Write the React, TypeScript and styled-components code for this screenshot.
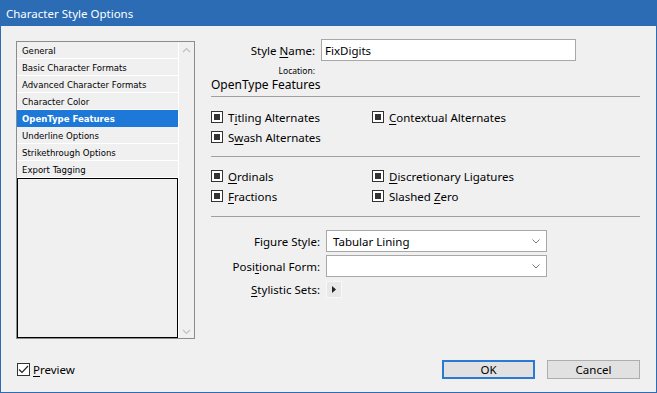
import styled, { createGlobalStyle } from 'styled-components';

const GlobalStyle = createGlobalStyle`
  html, body {
    margin: 0;
    padding: 0;
    background: #f0f0f0;
  }
  * { box-sizing: border-box; }
`;

const accent = '#2b6cb5';
const uiFont = `"Noto Sans", "Open Sans", sans-serif`;

const Window = styled.div`
  width: 657px;
  height: 393px;
  display: flex;
  flex-direction: column;
  border: 1px solid ${accent};
  border-top: none;
  background: #f0f0f0;
  font-family: ${uiFont};
  color: #000;
`;

const TitleBar = styled.div`
  height: 26px;
  margin: 0 -1px;
  padding-left: 6px;
  display: flex;
  align-items: center;
  background: ${accent};
  color: #fff;
  font-size: 11.5px;
`;

const Body = styled.div`
  flex: 1;
  display: flex;
  flex-direction: column;
  padding: 15px 16px 12px 15px;
`;

const Main = styled.div`
  display: flex;
  gap: 16px;
  flex: 1;
`;

const ListBox = styled.div`
  width: 179px;
  height: 298px;
  border: 1px solid #8c8c8c;
  display: flex;
  background: #f0f0f0;
`;

const ListItems = styled.div`
  width: 161px;
  display: flex;
  flex-direction: column;
`;

const ListItem = styled.div<{ $selected?: boolean }>`
  height: 17px;
  padding-left: 5px;
  display: flex;
  align-items: center;
  font-family: "DejaVu Sans Condensed", "Liberation Sans", sans-serif;
  font-size: 9.5px;
  border-bottom: 1px solid ${p => (p.$selected ? '#1e78d7' : '#ffffff')};
  background: ${p => (p.$selected ? '#1e78d7' : 'transparent')};
  color: ${p => (p.$selected ? '#fff' : '#000')};
  font-weight: ${p => (p.$selected ? 'bold' : 'normal')};
`;

const EmptyArea = styled.div`
  flex: 1;
  border: 1px solid #000;
`;

const ScrollBar = styled.div`
  flex: 1;
  border-left: 1px solid #fff;
  display: flex;
  flex-direction: column;
  justify-content: space-between;
  align-items: center;
  padding: 5px 0 3px;
`;

const Panel = styled.div`
  flex: 1;
  display: flex;
  flex-direction: column;
  margin-top: -2px;
  font-size: 11.5px;
`;

const FieldRow = styled.div<{ $labelWidth: number }>`
  display: grid;
  grid-template-columns: ${p => p.$labelWidth}px auto;
  column-gap: 6px;
  align-items: center;
`;

const Label = styled.span`
  text-align: right;
  white-space: nowrap;
`;

const TextInput = styled.div`
  width: 255px;
  height: 22px;
  border: 1px solid #a8a8a8;
  background: #fff;
  padding-left: 3px;
  display: flex;
  align-items: center;
`;

const Location = styled.div`
  width: 104px;
  text-align: right;
  font-size: 8.5px;
  margin-top: 4px;
  height: 12px;
`;

const SectionTitle = styled.div`
  margin-top: -1px;
  font-size: 12px;
  height: 17px;
  line-height: 17px;
`;

const Divider = styled.div<{ $top: number }>`
  height: 1px;
  background: #a0a0a0;
  margin-top: ${p => p.$top}px;
`;

const CheckGrid = styled.div<{ $top: number; $bottom: number }>`
  display: grid;
  grid-template-columns: 161px auto;
  grid-auto-rows: 20px;
  margin-top: ${p => p.$top}px;
  margin-bottom: ${p => p.$bottom}px;
`;

const CheckItem = styled.div`
  display: flex;
  align-items: center;
  gap: 5px;
  white-space: nowrap;
`;

const Box = styled.span`
  width: 12px;
  height: 12px;
  border: 1px solid #333;
  background: #fff;
  display: inline-flex;
  align-items: center;
  justify-content: center;
  &::after {
    content: '';
    width: 6px;
    height: 6px;
    background: #333;
  }
`;

const U = styled.span`
  text-decoration: underline;
  text-underline-offset: 2px;
`;

const FormArea = styled.div`
  margin-top: 13px;
  display: flex;
  flex-direction: column;
  gap: 3px;
`;

const Select = styled.div`
  width: 221px;
  height: 22px;
  border: 1px solid #a8a8a8;
  background: #fff;
  padding: 0 6px;
  display: flex;
  align-items: center;
  justify-content: space-between;
`;

const Expander = styled.div`
  width: 16px;
  height: 17px;
  margin-top: 1px;
  display: flex;
  align-items: center;
  justify-content: center;
  background: #e8e8e8;
  border: 1px solid #f8f8f8;
`;

const Footer = styled.div`
  display: flex;
  align-items: center;
  height: 22px;
`;

const PreviewCheck = styled.label`
  display: flex;
  align-items: center;
  gap: 3px;
  font-size: 11.5px;
  margin-left: 1px;
`;

const CheckBoxEmpty = styled.span`
  width: 13px;
  height: 13px;
  border: 1px solid #333;
  background: #fff;
  display: inline-flex;
  align-items: center;
  justify-content: center;
`;

const Buttons = styled.div`
  margin-left: auto;
  display: flex;
  gap: 12px;
`;

const Button = styled.div<{ $default?: boolean }>`
  width: 93px;
  height: 19px;
  display: flex;
  align-items: center;
  justify-content: center;
  background: #e1e1e1;
  border: ${p => (p.$default ? '2px solid #2a7ad4' : '1px solid #adadad')};
  font-size: 11.5px;
`;

const Chevron = ({ up }: { up?: boolean }) => (
  <svg width="9" height="6" viewBox="0 0 9 6">
    <path
      d={up ? 'M1 5 L4.5 1.5 L8 5' : 'M1 1 L4.5 4.5 L8 1'}
      fill="none"
      stroke="#c0c0c0"
      strokeWidth="1.2"
    />
  </svg>
);

const SmallChevron = () => (
  <svg width="8" height="5" viewBox="0 0 8 5">
    <path d="M0.5 0.5 L4 4 L7.5 0.5" fill="none" stroke="#7a7a7a" strokeWidth="1" />
  </svg>
);

const items = [
  'General',
  'Basic Character Formats',
  'Advanced Character Formats',
  'Character Color',
  'OpenType Features',
  'Underline Options',
  'Strikethrough Options',
  'Export Tagging',
];

export default function App() {
  return (
    <>
      <GlobalStyle />
      <Window>
        <TitleBar>Character Style Options</TitleBar>
        <Body>
          <Main>
            <ListBox>
              <ListItems>
                {items.map(item => (
                  <ListItem key={item} $selected={item === 'OpenType Features'}>
                    {item}
                  </ListItem>
                ))}
                <EmptyArea />
              </ListItems>
              <ScrollBar>
                <Chevron up />
                <Chevron />
              </ScrollBar>
            </ListBox>
            <Panel>
              <FieldRow $labelWidth={104}>
                <Label>
                  Style <U>N</U>ame:
                </Label>
                <TextInput>FixDigits</TextInput>
              </FieldRow>
              <Location>Location:</Location>
              <SectionTitle>OpenType Features</SectionTitle>
              <Divider $top={3} />
              <CheckGrid $top={10} $bottom={9}>
                <CheckItem>
                  <Box />
                  <span>
                    T<U>i</U>tling Alternates
                  </span>
                </CheckItem>
                <CheckItem>
                  <Box />
                  <span>
                    <U>C</U>ontextual Alternates
                  </span>
                </CheckItem>
                <CheckItem>
                  <Box />
                  <span>
                    S<U>w</U>ash Alternates
                  </span>
                </CheckItem>
              </CheckGrid>
              <Divider $top={0} />
              <CheckGrid $top={9} $bottom={10}>
                <CheckItem>
                  <Box />
                  <span>
                    <U>O</U>rdinals
                  </span>
                </CheckItem>
                <CheckItem>
                  <Box />
                  <span>
                    <U>D</U>iscretionary Ligatures
                  </span>
                </CheckItem>
                <CheckItem>
                  <Box />
                  <span>
                    <U>F</U>ractions
                  </span>
                </CheckItem>
                <CheckItem>
                  <Box />
                  <span>
                    Slashed <U>Z</U>ero
                  </span>
                </CheckItem>
              </CheckGrid>
              <Divider $top={0} />
              <FormArea>
                <FieldRow $labelWidth={109}>
                  <Label>
                    Fi<U>g</U>ure Style:
                  </Label>
                  <Select>
                    <span>Tabular Lining</span>
                    <SmallChevron />
                  </Select>
                </FieldRow>
                <FieldRow $labelWidth={109}>
                  <Label>
                    Posi<U>t</U>ional Form:
                  </Label>
                  <Select>
                    <span />
                    <SmallChevron />
                  </Select>
                </FieldRow>
                <FieldRow $labelWidth={109}>
                  <Label>
                    <U>S</U>tylistic Sets:
                  </Label>
                  <Expander>
                    <svg width="4" height="7" viewBox="0 0 4 7">
                      <path d="M0 0 L4 3.5 L0 7 Z" fill="#222" />
                    </svg>
                  </Expander>
                </FieldRow>
              </FormArea>
            </Panel>
          </Main>
          <Footer>
            <PreviewCheck>
              <CheckBoxEmpty>
                <svg width="11" height="9" viewBox="0 0 11 9">
                  <path d="M1 4.5 L4 7.5 L10 1" fill="none" stroke="#222" strokeWidth="1.2" />
                </svg>
              </CheckBoxEmpty>
              <span>
                <U>P</U>review
              </span>
            </PreviewCheck>
            <Buttons>
              <Button $default>OK</Button>
              <Button>Cancel</Button>
            </Buttons>
          </Footer>
        </Body>
      </Window>
    </>
  );
}
